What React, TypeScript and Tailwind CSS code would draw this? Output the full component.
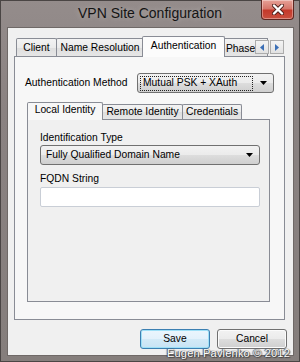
import React from 'react';

const tabBase =
  "flex items-center justify-center border border-[#898c95] border-b-0 rounded-t-[2px] text-[10.3px] text-black";

const OuterTab = ({ label, width, active }: { label: string; width: number; active?: boolean }) => (
  <div
    style={{ width }}
    className={
      active
        ? `${tabBase} h-[21px] -mb-px relative z-10 bg-[#fcfcfc] pb-[3px] -mx-[2px]`
        : `${tabBase} h-[18px] bg-[linear-gradient(#f3f3f3,#ebebeb_50%,#dedede_51%,#e6e6e6)] -ml-px first:ml-0`
    }
  >
    {label}
  </div>
);

const ComboArrow = () => (
  <svg width="7" height="4" viewBox="0 0 7 4" className="shrink-0">
    <path d="M0 0h7L3.5 4z" fill="#000" />
  </svg>
);

const Combo = ({ value, focused, width }: { value: string; focused?: boolean; width: number }) => (
  <div
    style={{ width }}
    className="h-[20px] flex items-center border border-[#707070] rounded-[3px] bg-[linear-gradient(#f2f2f2,#ebebeb_50%,#dddddd_51%,#cfcfcf)] pl-[2px] pr-[6px] text-[10.3px] text-black"
  >
    <div
      className={
        focused
          ? "flex-1 h-[15px] flex items-center px-[2px] border border-dotted border-[#222]"
          : "flex-1 h-[15px] flex items-center px-[3px]"
      }
    >
      {value}
    </div>
    <div className="w-[14px] flex justify-end">
      <ComboArrow />
    </div>
  </div>
);

const ScrollBtn = ({ dir }: { dir: 'l' | 'r' }) => (
  <div className="w-[14px] h-[14px] border border-[#acacac] bg-[linear-gradient(#f4f4f4,#e2e2e2)] flex items-center justify-center">
    <svg width="4" height="7" viewBox="0 0 4 7">
      {dir === 'l' ? <path d="M4 0v7L0 3.5z" fill="#3b6fb6" /> : <path d="M0 0v7l4-3.5z" fill="#3b6fb6" />}
    </svg>
  </div>
);

const Button = ({ label, primary }: { label: string; primary?: boolean }) => (
  <div
    className={
      primary
        ? "w-[70px] h-[20px] rounded-[3px] border border-[#3c7fb1] shadow-[inset_0_0_0_1px_#9ee0f7] bg-[linear-gradient(#eaf6fd,#e3f1fb_50%,#d3eaf7_51%,#c8e3f4)] flex items-center justify-center text-[10.3px] text-black"
        : "w-[70px] h-[20px] rounded-[3px] border border-[#707070] shadow-[inset_0_0_0_1px_#fbfbfb] bg-[linear-gradient(#f2f2f2,#ebebeb_50%,#dddddd_51%,#cfcfcf)] flex items-center justify-center text-[10.3px] text-black"
    }
  >
    {label}
  </div>
);

export default function App() {
  return (
    <div className="w-[300px] h-[362px] relative bg-[linear-gradient(#948c8b,#8a8281_30%,#857e7c)] shadow-[inset_0_0_0_1px_#4a4544] pt-[28px] pl-[8px] pr-[7px] pb-[7px] font-['Liberation_Sans',Arial,sans-serif] overflow-hidden">
      {/* title bar */}
      <div className="absolute left-0 top-0 w-full h-[28px] flex items-center justify-center pb-[1px]">
        <span className="text-[14px] text-[#141414] [text-shadow:0_0_6px_rgba(255,255,255,0.35)]">
          VPN Site Configuration
        </span>
      </div>
      <div className="absolute right-[6px] top-0 w-[33px] h-[20px] rounded-b-[4px] border border-t-0 border-[#5d2620] bg-[linear-gradient(#e7a197,#d6776b_45%,#c4392b_55%,#c9503f)] flex items-center justify-center shadow-[inset_0_0_0_1px_rgba(255,255,255,0.35)]">
        <svg width="12" height="11" viewBox="0 0 12 11">
          <path d="M2 1.5l8 8M10 1.5l-8 8" stroke="#4a1d18" strokeWidth="4" strokeLinecap="round" />
          <path d="M2 1.5l8 8M10 1.5l-8 8" stroke="#fff" strokeWidth="2.4" strokeLinecap="round" />
        </svg>
      </div>

      {/* client area */}
      <div className="h-full bg-[#f0f0f0] shadow-[0_0_0_1px_#6f6967] flex flex-col">
        <div className="ml-[6px] mt-[7px] w-[271px]">
          {/* outer tab strip */}
          <div className="h-[21px] flex items-end pl-[2px] relative">
            <OuterTab label="Client" width={41} />
            <OuterTab label="Name Resolution" width={88} />
            <OuterTab label="Authentication" width={83} active />
            <div className="h-[18px] w-[46px] border border-[#898c95] border-b-0 bg-[linear-gradient(#f3f3f3,#ebebeb_50%,#dedede_51%,#e6e6e6)] text-[10.3px] text-black whitespace-nowrap pl-[3px] pt-[2px] -ml-px">
              Phase 1
            </div>
            <div className="absolute right-[1px] top-[5px] flex gap-[1px] z-20">
              <ScrollBtn dir="l" />
              <ScrollBtn dir="r" />
            </div>
          </div>

          {/* outer panel */}
          <div className="h-[264px] border border-[#898c95] bg-[#f7f7f7] flex flex-col">
            <div className="mt-[16px] pl-[10px] pr-[10px] flex items-center justify-between">
              <span className="text-[10.3px] text-black">Authentication Method</span>
              <Combo value="Mutual PSK + XAuth" focused width={137} />
            </div>

            <div className="ml-[12px] mt-[8px] w-[243px]">
              {/* inner tab strip */}
              <div className="h-[18px] flex items-end pl-[2px]">
                <div className={`${tabBase} h-[18px] w-[76px] -ml-[2px] -mb-px relative z-10 bg-[#f7f7f7] pb-[3px]`}>
                  Local Identity
                </div>
                <div className={`${tabBase} h-[15px] w-[81px] -ml-px bg-[linear-gradient(#f3f3f3,#ebebeb_50%,#dedede_51%,#e6e6e6)]`}>
                  Remote Identity
                </div>
                <div className={`${tabBase} h-[15px] w-[60px] -ml-px bg-[linear-gradient(#f3f3f3,#ebebeb_50%,#dedede_51%,#e6e6e6)]`}>
                  Credentials
                </div>
              </div>

              {/* inner panel */}
              <div className="h-[183px] border border-[#898c95] bg-[#f0f0f0] pl-[12px] pt-[11px] flex flex-col">
                <span className="text-[10.3px] text-black leading-[13px]">Identification Type</span>
                <div className="mt-[1px]">
                  <Combo value="Fully Qualified Domain Name" width={220} />
                </div>
                <span className="text-[10.3px] text-black leading-[13px] mt-[7px]">FQDN String</span>
                <div className="mt-[2px] w-[220px] h-[20px] bg-white border border-[#c9ced6] rounded-[2px]" />
              </div>
            </div>
          </div>
        </div>

        {/* buttons */}
        <div className="mt-[9px] flex justify-end gap-[7px] pr-[6px]">
          <Button label="Save" primary />
          <Button label="Cancel" />
        </div>
      </div>

      {/* watermark */}
      <div className="absolute right-[10px] bottom-[3px] text-[11px] tracking-[0.2px] text-white [text-shadow:0_0_1px_#333,1px_1px_1px_#444,-1px_0_1px_#444] leading-[12px]">
        Eugen Pavlenko © 2012
      </div>
    </div>
  );
}
